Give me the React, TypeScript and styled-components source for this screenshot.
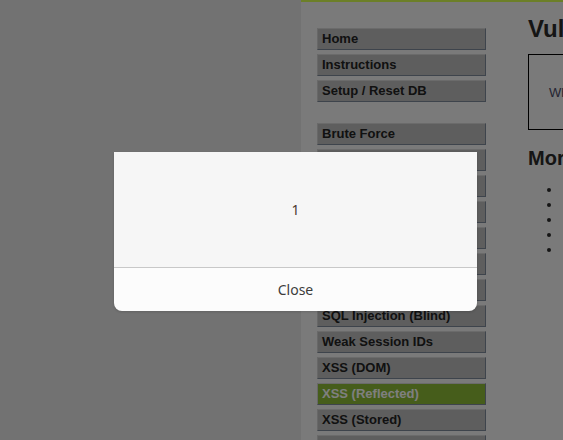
import React from "react";
import styled, { createGlobalStyle } from "styled-components";

const Global = createGlobalStyle`
  html, body { margin: 0; padding: 0; height: 100%; overflow: hidden; }
  body { background: #e4e4e4; font-family: "Liberation Sans", Arial, sans-serif; }
  #root { height: 100%; }
`;

const Page = styled.div`
  height: 440px;
  width: 563px;
  overflow: hidden;
  display: flex;
`;

const Container = styled.div`
  margin-left: 301px;
  flex: 0 0 auto;
  width: 700px;
  height: 440px;
  background: #f4f4f4;
  border-top: 2px solid #d8ff50;
  display: flex;
  align-items: flex-start;
  box-sizing: border-box;
`;

const Menu = styled.nav`
  flex: 0 0 169px;
  margin-left: 16px;
  padding-top: 26px;
  display: flex;
  flex-direction: column;
  gap: 21px;
`;

const MenuGroup = styled.ul`
  list-style: none;
  margin: 0;
  padding: 0;
  display: flex;
  flex-direction: column;
  gap: 4px;
`;

const MenuItem = styled.li<{ $selected?: boolean }>`
  box-sizing: border-box;
  height: 22px;
  line-height: 20px;
  padding-left: 4px;
  border: 1px solid;
  border-color: #d6d6d6 #7c8898 #7c8898 #d0d0d0;
  background: ${(p) => (p.$selected ? "#8cba36" : "#bcbcbc")};
  color: ${(p) => (p.$selected ? "#ffffff" : "#222222")};
  font-size: 13px;
  font-weight: bold;
  white-space: nowrap;
  overflow: hidden;
`;

const Main = styled.main`
  margin-left: 42px;
  flex: 1;
  padding-top: 12px;
`;

const Title = styled.h1`
  margin: 0;
  font-size: 24px;
  line-height: 30px;
  font-weight: bold;
  color: #2a2a2a;
  white-space: nowrap;
`;

const FormBox = styled.div`
  margin-top: 10px;
  height: 76px;
  box-sizing: border-box;
  border: 1px solid #000;
  display: flex;
  align-items: center;
  padding-left: 20px;
  font-size: 13px;
  color: #4a4a66;
  white-space: nowrap;
`;

const SubTitle = styled.h2`
  margin: 16px 0 0;
  font-size: 20px;
  line-height: 24px;
  font-weight: bold;
  color: #2a2a2a;
  white-space: nowrap;
`;

const Links = styled.ul`
  margin: 12px 0 0;
  padding-left: 34px;
  font-size: 13px;
  line-height: 15px;
  color: #2a2a2a;
  white-space: nowrap;
`;

const Overlay = styled.div`
  position: fixed;
  inset: 0;
  background: rgba(0, 0, 0, 0.5);
`;

const Dialog = styled.div`
  position: fixed;
  left: 114px;
  top: 152px;
  width: 363px;
  border-radius: 0 0 8px 8px;
  overflow: hidden;
  font-family: "Noto Sans", "Open Sans", sans-serif;
  font-size: 14px;
  color: #3c3c3c;
  display: flex;
  flex-direction: column;
  box-shadow: 0 1px 3px rgba(0, 0, 0, 0.15);
`;

const DialogBody = styled.div`
  height: 115px;
  background: #f6f6f6;
  display: flex;
  align-items: center;
  justify-content: center;
  border-bottom: 1px solid #c8c8c8;
  color: #4a3a30;
`;

const DialogFooter = styled.button`
  height: 43px;
  border: none;
  background: #fcfcfc;
  font: inherit;
  color: #3c3c3c;
  padding: 0 0 1px;
`;

const topItems = ["Home", "Instructions", "Setup / Reset DB"];
const vulnItems = [
  "Brute Force",
  "Command Injection",
  "CSRF",
  "File Inclusion",
  "File Upload",
  "Insecure CAPTCHA",
  "SQL Injection",
  "SQL Injection (Blind)",
  "Weak Session IDs",
  "XSS (DOM)",
  "XSS (Reflected)",
  "XSS (Stored)",
  "CSP Bypass",
];

export default function App() {
  return (
    <>
      <Global />
      <Page>
        <Container>
          <Menu>
            <MenuGroup>
              {topItems.map((t) => (
                <MenuItem key={t}>{t}</MenuItem>
              ))}
            </MenuGroup>
            <MenuGroup>
              {vulnItems.map((t) => (
                <MenuItem key={t} $selected={t === "XSS (Reflected)"}>
                  {t}
                </MenuItem>
              ))}
            </MenuGroup>
          </Menu>
          <Main>
            <Title>Vulnerability: Reflected Cross Site Scripting (XSS)</Title>
            <FormBox>What's your name?</FormBox>
            <SubTitle>More Information</SubTitle>
            <Links>
              <li>&nbsp;</li>
              <li>&nbsp;</li>
              <li>&nbsp;</li>
              <li>&nbsp;</li>
              <li>&nbsp;</li>
            </Links>
          </Main>
        </Container>
      </Page>
      <Overlay />
      <Dialog role="alertdialog">
        <DialogBody>1</DialogBody>
        <DialogFooter>Close</DialogFooter>
      </Dialog>
    </>
  );
}
